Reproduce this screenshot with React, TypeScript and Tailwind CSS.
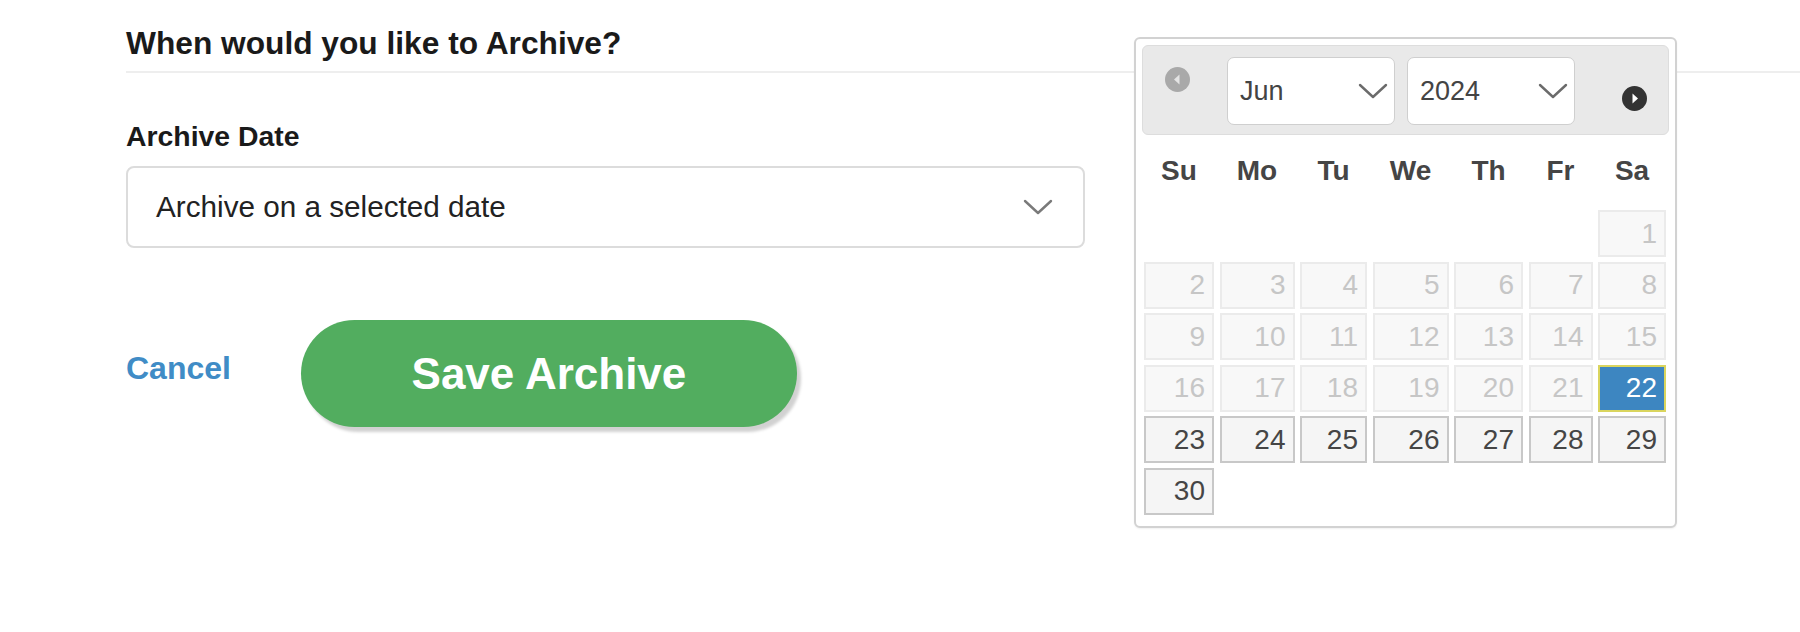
import React from "react";

type DayState = "past" | "today" | "open";
type DayCell = { day: number; state: DayState } | null;

const dayNames = ["Su", "Mo", "Tu", "We", "Th", "Fr", "Sa"];

// June 2024 starts on a Saturday; the 22nd is the selected/today cell.
function buildCells(): DayCell[] {
  const cells: DayCell[] = [null, null, null, null, null, null];
  for (let day = 1; day <= 30; day++) {
    cells.push({ day, state: day < 22 ? "past" : day === 22 ? "today" : "open" });
  }
  return cells;
}

function Chevron({ className }: { className?: string }) {
  return (
    <svg className={className} viewBox="0 0 30 16" fill="none">
      <path d="M2 2 L15 14 L28 2" stroke="currentColor" strokeWidth="2.4" strokeLinecap="round" strokeLinejoin="round" />
    </svg>
  );
}

function CircleArrow({ dir, dark }: { dir: "left" | "right"; dark: boolean }) {
  return (
    <svg className="h-[25px] w-[25px]" viewBox="0 0 25 25">
      <circle cx="12.5" cy="12.5" r="12.5" fill={dark ? "#333333" : "#a9a9a9"} />
      {dir === "left" ? (
        <path d="M14.5 7.5 L9 12.5 L14.5 17.5 Z" fill={dark ? "#ffffff" : "#e4e4e4"} />
      ) : (
        <path d="M10.5 7.5 L16 12.5 L10.5 17.5 Z" fill={dark ? "#ffffff" : "#e4e4e4"} />
      )}
    </svg>
  );
}

function HeaderSelect({ value, width }: { value: string; width: string }) {
  return (
    <div className={`mt-[11px] flex h-[68px] ${width} items-center justify-between rounded-[7px] border border-[#cfcfcf] bg-white pl-[12px] pr-[6px]`}>
      <span className="text-[27px] text-[#444444]">{value}</span>
      <Chevron className="h-[16px] w-[30px] text-[#6b6b6b]" />
    </div>
  );
}

function DatePicker() {
  const cells = buildCells();
  return (
    <div className="absolute left-[1134px] top-[37px] h-[491px] w-[543px] rounded-[6px] border-2 border-[#d2d2d2] bg-white p-[6px] font-['Liberation_Sans',Arial,sans-serif] shadow-[0_1px_2px_rgba(0,0,0,0.06)]">
      <div className="flex h-[90px] items-start rounded-[6px] border border-[#dddddd] bg-[#e9e9e9]">
        <div className="ml-[22px] mt-[21px]">
          <CircleArrow dir="left" dark={false} />
        </div>
        <div className="ml-[37px]">
          <HeaderSelect value="Jun" width="w-[168px]" />
        </div>
        <div className="ml-[12px]">
          <HeaderSelect value="2024" width="w-[168px]" />
        </div>
        <div className="ml-[47px] mt-[40px]">
          <CircleArrow dir="right" dark />
        </div>
      </div>

      <div className="ml-[2px] mt-[16px] grid grid-cols-[70px_75px_67px_76px_69px_64px_68px] gap-x-[5.5px]">
        {dayNames.map((name) => (
          <div className="flex h-[40px] items-center justify-center text-[28px] font-bold text-[#454545]" key={name}>
            {name}
          </div>
        ))}
      </div>

      <div className="ml-[2px] mt-[19px] grid grid-cols-[70px_75px_67px_76px_69px_64px_68px] gap-x-[5.5px] gap-y-[4.5px]">
        {cells.map((cell, index) => {
          if (!cell) return <div className="h-[47px]" key={`empty-${index}`} />;
          const tone =
            cell.state === "past"
              ? "border-[#ebebeb] bg-[#f8f8f8] text-[#c6c6c6]"
              : cell.state === "today"
                ? "border-[#dad55e] bg-[#3d86c1] text-white"
                : "border-[#c8c8c8] bg-[#f5f5f5] text-[#454545]";
          return (
            <div className={`flex h-[47px] items-center justify-end border-2 pr-[7px] text-[28px] ${tone}`} key={cell.day}>
              {cell.day}
            </div>
          );
        })}
      </div>
    </div>
  );
}

export default function App() {
  return (
    <div className="relative h-[632px] w-full overflow-hidden bg-white font-['Liberation_Sans',Arial,sans-serif] text-[#1b1b1b]">
      <div className="pl-[126px] pt-[25px]">
        <h1 className="text-[31.7px] font-bold leading-[36px] text-[#1a1a1a]">When would you like to Archive?</h1>
        <div className="mt-[10px] h-[2px] w-full bg-[#eeeeee]" />

        <div className="mt-[47px] text-[28.4px] font-bold leading-[32px] text-[#1a1a1a]">Archive Date</div>
        <div className="mt-[14px] flex h-[82px] w-[959px] items-center justify-between rounded-[8px] border-2 border-[#dcdcdc] bg-white pl-[28px] pr-[30px]">
          <span className="text-[29.7px] text-[#222222]">Archive on a selected date</span>
          <Chevron className="h-[16px] w-[30px] text-[#7a7a7a]" />
        </div>

        <div className="mt-[72px] flex items-start">
          <button className="mt-[29px] text-[32px] font-bold leading-[38px] text-[#408cc6]" type="button">
            Cancel
          </button>
          <button
            className="ml-[70px] flex h-[107px] w-[496px] items-center justify-center rounded-full bg-[#52ad5f] text-[44px] font-bold text-white shadow-[4px_5px_3px_rgba(0,0,0,0.18)]"
            type="button"
          >
            Save Archive
          </button>
        </div>
      </div>

      <DatePicker />
    </div>
  );
}
